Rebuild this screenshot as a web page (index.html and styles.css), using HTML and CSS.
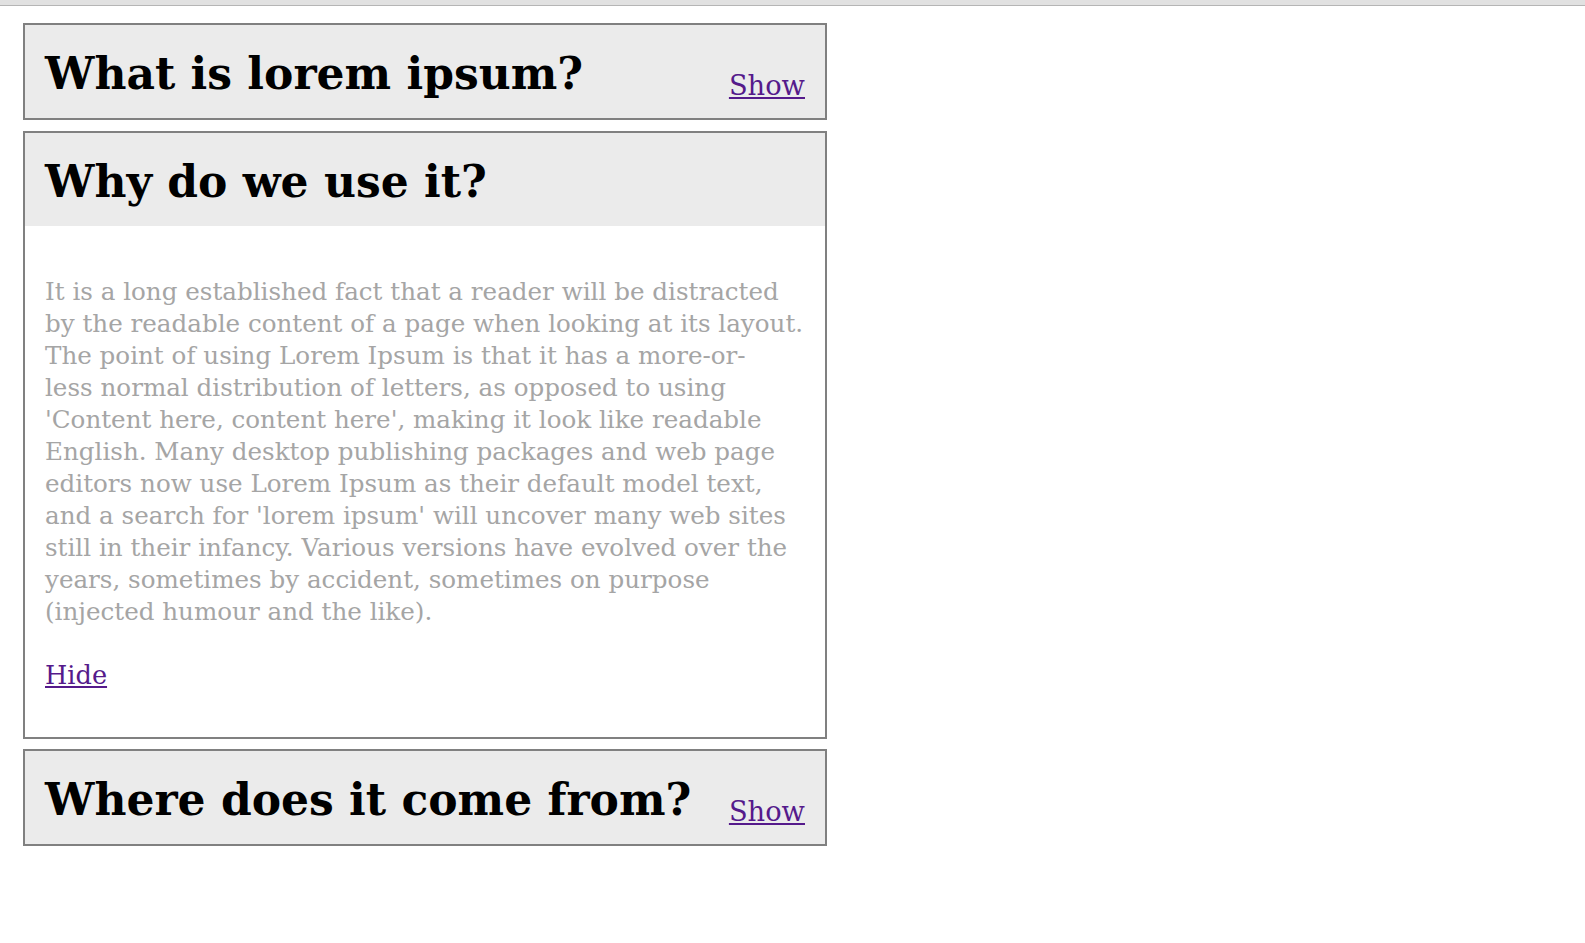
FILE: index.html
```html
<!DOCTYPE html>
<html lang="en">
<head>
<meta charset="utf-8">
<title>Accordion</title>
<link rel="stylesheet" href="styles.css">
</head>
<body>
<div class="topbar"></div>
<main class="accordion">
  <section class="panel">
    <div class="panel-head">
      <h2 class="panel-title">What is lorem ipsum?</h2>
      <a class="toggle" href="#">Show</a>
    </div>
  </section>
  <section class="panel">
    <div class="panel-head">
      <h2 class="panel-title">Why do we use it?</h2>
    </div>
    <div class="panel-body">
      <p class="panel-text">It is a long established fact that a reader will be distracted<br>by the readable content of a page when looking at its layout.<br>The point of using Lorem Ipsum is that it has a more-or-<br>less normal distribution of letters, as opposed to using<br>'Content here, content here', making it look like readable<br>English. Many desktop publishing packages and web page<br>editors now use Lorem Ipsum as their default model text,<br>and a search for 'lorem ipsum' will uncover many web sites<br>still in their infancy. Various versions have evolved over the<br>years, sometimes by accident, sometimes on purpose<br>(injected humour and the like).</p>
      <a class="hide" href="#">Hide</a>
    </div>
  </section>
  <section class="panel">
    <div class="panel-head">
      <h2 class="panel-title">Where does it come from?</h2>
      <a class="toggle" href="#">Show</a>
    </div>
  </section>
</main>
</body>
</html>
```
FILE: styles.css
```css
html, body {
  margin: 0;
  padding: 0;
  background: #ffffff;
}

body {
  font-family: "DejaVu Serif", "Liberation Serif", serif;
}

.topbar {
  height: 5px;
  background: #e1e1e1;
  border-bottom: 1px solid #b5b5b5;
}

.accordion {
  padding: 17px 0 0 23px;
  display: flex;
  flex-direction: column;
  align-items: flex-start;
  gap: 10px;
}

.panel {
  width: 800px;
  border: 2px solid #808080;
}

.panel:first-child {
  margin-bottom: 1px;
}

.panel-head {
  box-sizing: border-box;
  height: 93px;
  padding: 27px 20px 0;
  background: #ebebeb;
  display: flex;
  justify-content: space-between;
  align-items: flex-start;
}

.panel-title {
  margin: 0;
  font-size: 44px;
  line-height: 44px;
  font-weight: bold;
  color: #000000;
}

.toggle,
.hide {
  color: #551a8b;
  text-decoration: underline;
}

.toggle {
  margin-top: 20px;
  font-size: 27.3px;
  line-height: 28px;
}

.panel-body {
  padding: 50px 20px 46px;
}

.panel-text {
  margin: 0 0 31px;
  font-size: 24.6px;
  line-height: 32px;
  color: #a5a5a5;
  white-space: nowrap;
}

.hide {
  display: inline-block;
  font-size: 25.6px;
  line-height: 32px;
}
```
